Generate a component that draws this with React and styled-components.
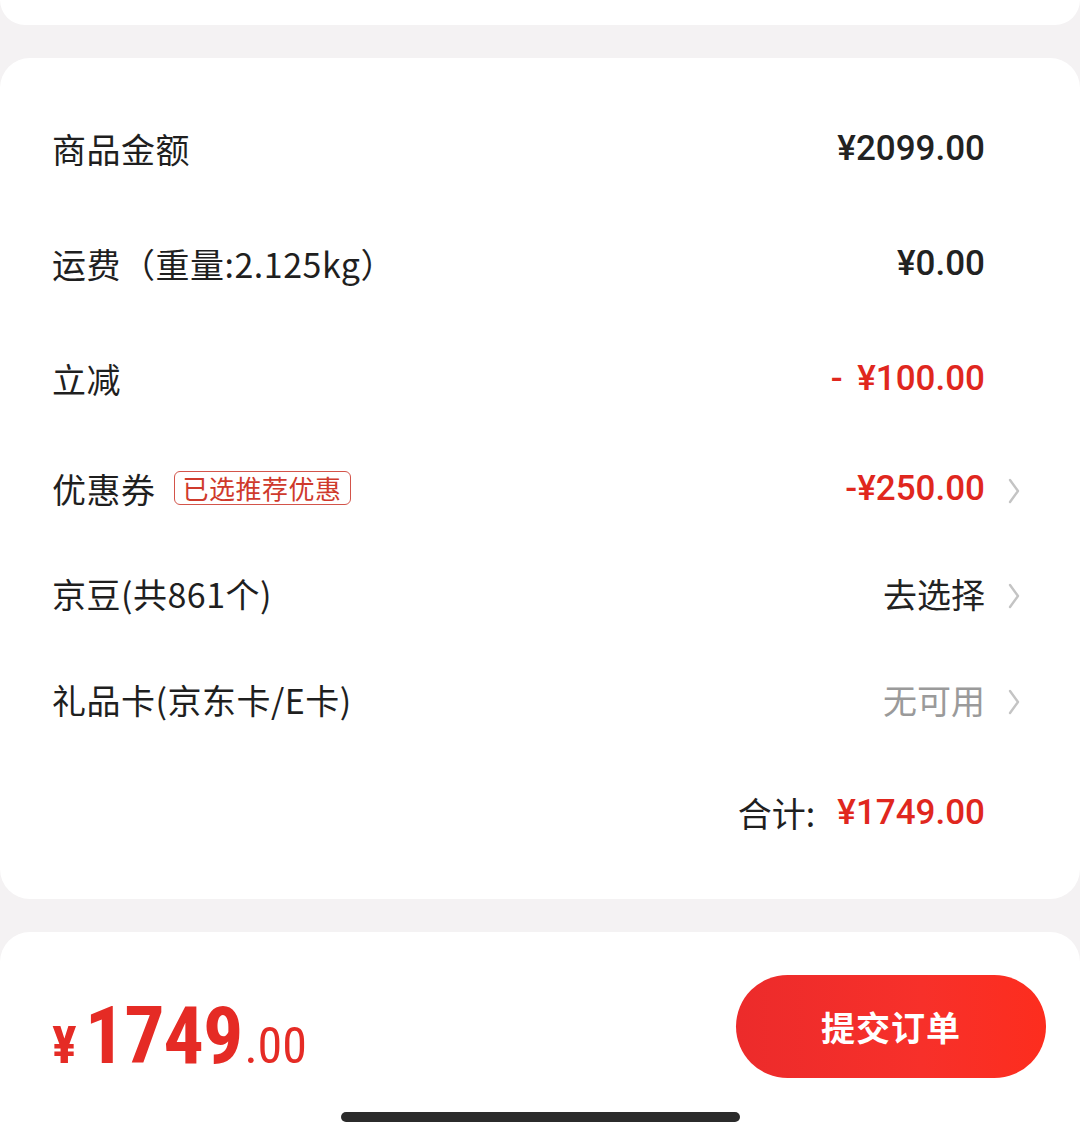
import React from "react";
import styled, { createGlobalStyle } from "styled-components";

const GlobalStyle = createGlobalStyle`
  html, body {
    margin: 0;
    padding: 0;
    background: #f4f2f3;
  }
  body {
    font-family: "Noto Sans CJK SC", "Noto Sans", sans-serif;
    color: #1f1f1f;
  }
`;

const red = "#e0271e";

const Page = styled.div`
  display: flex;
  flex-direction: column;
  gap: 33px;
  min-height: 1139px;
`;

const TopStub = styled.div`
  height: 25px;
  background: #fff;
  border-radius: 0 0 30px 30px;
`;

const Card = styled.div`
  background: #fff;
  border-radius: 30px;
  padding: 33px 58px 27px 52px;
  display: flex;
  flex-direction: column;
`;

const Row = styled.div`
  height: ${(p) => p.$h}px;
  display: flex;
  align-items: center;
  justify-content: space-between;
`;

const Label = styled.div`
  display: flex;
  align-items: center;
  gap: 18px;
  font-size: 34px;
  color: #1f1f1f;
  letter-spacing: 0.5px;
`;

const Badge = styled.span`
  font-size: 26px;
  line-height: 32px;
  color: #cf3a2c;
  border: 1.5px solid #d3544a;
  border-radius: 6px;
  padding: 0 8px;
`;

const Right = styled.div`
  display: flex;
  align-items: center;
`;

const Amount = styled.span`
  font-family: Roboto, "Noto Sans CJK SC", sans-serif;
  font-weight: 500;
  font-size: 35px;
  color: ${(p) => (p.$red ? red : "#222")};
  white-space: pre;
`;

const Hint = styled.span`
  font-size: 34px;
  color: ${(p) => (p.$muted ? "#9a9a9a" : "#222")};
`;

const ChevronSlot = styled.div`
  width: 37px;
  display: flex;
  justify-content: flex-end;
  padding-right: 2px;
  box-sizing: border-box;
  margin-top: 6px;
`;

const TotalRow = styled(Row)`
  justify-content: flex-end;
`;

const TotalLabel = styled.span`
  font-size: 34px;
  color: #1f1f1f;
  margin-right: 22px;
`;

const Bottom = styled.div`
  flex: 1;
  background: #fff;
  border-radius: 30px 30px 0 0;
  padding-top: 43px;
  display: flex;
  flex-direction: column;
`;

const Bar = styled.div`
  display: flex;
  align-items: center;
  justify-content: space-between;
  padding: 0 34px 0 52px;
`;

const Price = styled.div`
  display: flex;
  align-items: baseline;
  color: #e52b25;
  font-family: "Liberation Sans Narrow", "Roboto Condensed", Roboto, sans-serif;
  font-weight: 700;
  margin-top: 18px;
`;

const Yen = styled.span`
  font-size: 52px;
  margin-right: 8px;
`;

const Big = styled.span`
  font-size: 80px;
  line-height: 1;
  letter-spacing: -1px;
`;

const Cents = styled.span`
  font-size: 50px;
  font-weight: 400;
  margin-left: 2px;
`;

const SubmitButton = styled.button`
  width: 310px;
  height: 103px;
  border: none;
  border-radius: 52px;
  background: linear-gradient(90deg, #ec2b2b 0%, #f7302a 60%, #fd2d1e 100%);
  color: #fff;
  font-family: "Noto Sans CJK SC", sans-serif;
  font-weight: 700;
  font-size: 34px;
  letter-spacing: 1px;
`;

const HomeIndicator = styled.div`
  width: 399px;
  height: 10px;
  border-radius: 5px;
  background: #2b2b2b;
  margin: 34px auto 0;
`;

const Chevron = () => (
  <svg width="12" height="26" viewBox="0 0 12 26" fill="none">
    <path d="M2 2 L10 13 L2 24" stroke="#c4c4c4" strokeWidth="2.4" strokeLinecap="round" strokeLinejoin="round" />
  </svg>
);

const rows = [
  { label: "商品金额", value: <Amount>¥2099.00</Amount>, h: 115 },
  { label: "运费（重量:2.125kg）", value: <Amount>¥0.00</Amount>, h: 115 },
  { label: "立减", value: <Amount $red>{"- \u2006¥100.00"}</Amount>, h: 115 },
  {
    label: "优惠券",
    badge: "已选推荐优惠",
    value: <Amount $red>-¥250.00</Amount>,
    arrow: true,
    h: 104,
  },
  { label: "京豆(共861个)", value: <Hint>去选择</Hint>, arrow: true, h: 106 },
  { label: "礼品卡(京东卡/E卡)", value: <Hint $muted>无可用</Hint>, arrow: true, h: 106 },
];

export default function App() {
  return (
    <>
      <GlobalStyle />
      <Page>
        <TopStub />
        <Card>
          {rows.map((r) => (
            <Row key={r.label} $h={r.h}>
              <Label>
                {r.label}
                {r.badge && <Badge>{r.badge}</Badge>}
              </Label>
              <Right>
                {r.value}
                <ChevronSlot>{r.arrow && <Chevron />}</ChevronSlot>
              </Right>
            </Row>
          ))}
          <TotalRow $h={120}>
            <TotalLabel>合计:</TotalLabel>
            <Amount $red>¥1749.00</Amount>
            <ChevronSlot />
          </TotalRow>
        </Card>
        <Bottom>
          <Bar>
            <Price>
              <Yen>¥</Yen>
              <Big>1749</Big>
              <Cents>.00</Cents>
            </Price>
            <SubmitButton>提交订单</SubmitButton>
          </Bar>
          <HomeIndicator />
        </Bottom>
      </Page>
    </>
  );
}
